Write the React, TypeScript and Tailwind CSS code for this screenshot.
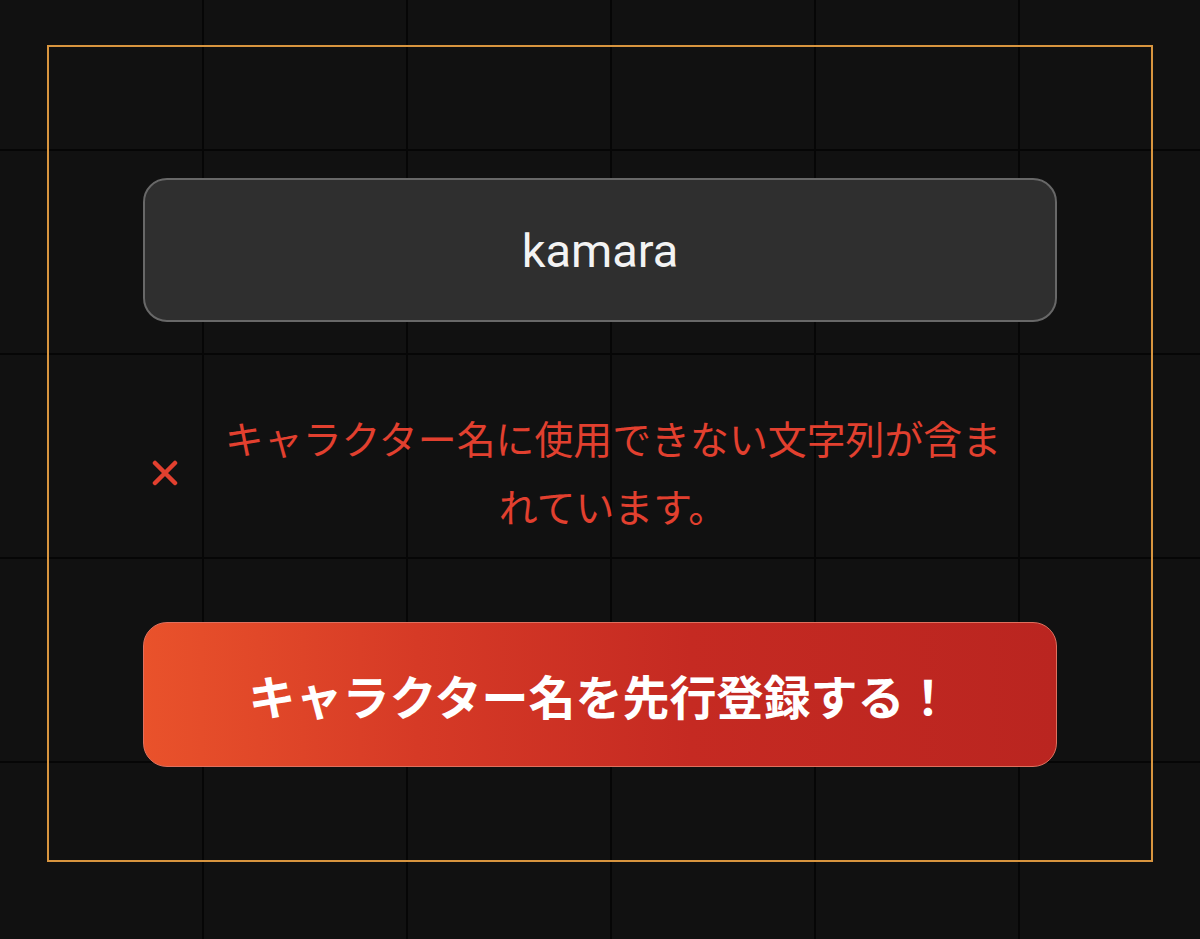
import React from "react";

const jp = "font-['Noto_Sans_CJK_JP','Noto_Sans',sans-serif]";

const App = () => {
  return (
    <div className="min-h-[939px] w-full bg-[#111111] bg-[linear-gradient(to_right,#060606_2px,transparent_2px),linear-gradient(to_bottom,#060606_2px,transparent_2px)] bg-[size:204px_204px] bg-[position:202px_149px] pt-[45px] pl-[47px]">
      <div className="flex h-[817px] w-[1106px] flex-col border-2 border-[#d8953f] px-[94px] pt-[131px]">
        {/* name input */}
        <div className="flex h-[144px] items-center justify-center rounded-[24px] border-2 border-[#686868] bg-[#2f2f2f]">
          <span className="font-['Roboto',sans-serif] text-[47px] leading-none text-[#f3f3f3]">
            kamara
          </span>
        </div>

        {/* error */}
        <div className="mt-[81px] flex items-center pl-[9px] pr-[49px]">
          <svg
            width="26"
            height="26"
            viewBox="0 0 26 26"
            className="shrink-0 translate-y-[2px]"
          >
            <path
              d="M3 3 L23 23 M23 3 L3 23"
              stroke="#e2402f"
              strokeWidth="4.5"
              strokeLinecap="round"
            />
          </svg>
          <p
            className={`${jp} ml-[40px] flex-1 text-center text-[38.9px] leading-[68px] text-[#e2402f]`}
          >
            キャラクター名に使用できない文字列が含まれています。
          </p>
        </div>

        {/* submit */}
        <button
          className={`${jp} mt-[83px] flex h-[145px] items-center justify-center rounded-[24px] border border-[#e0705e] bg-[linear-gradient(to_right,#e9522b_0%,#d63a26_30%,#c52a22_60%,#ba2520_100%)] text-[47px] font-bold leading-none text-white`}
        >
          キャラクター名を先行登録する！
        </button>
      </div>
    </div>
  );
};

export default App;
